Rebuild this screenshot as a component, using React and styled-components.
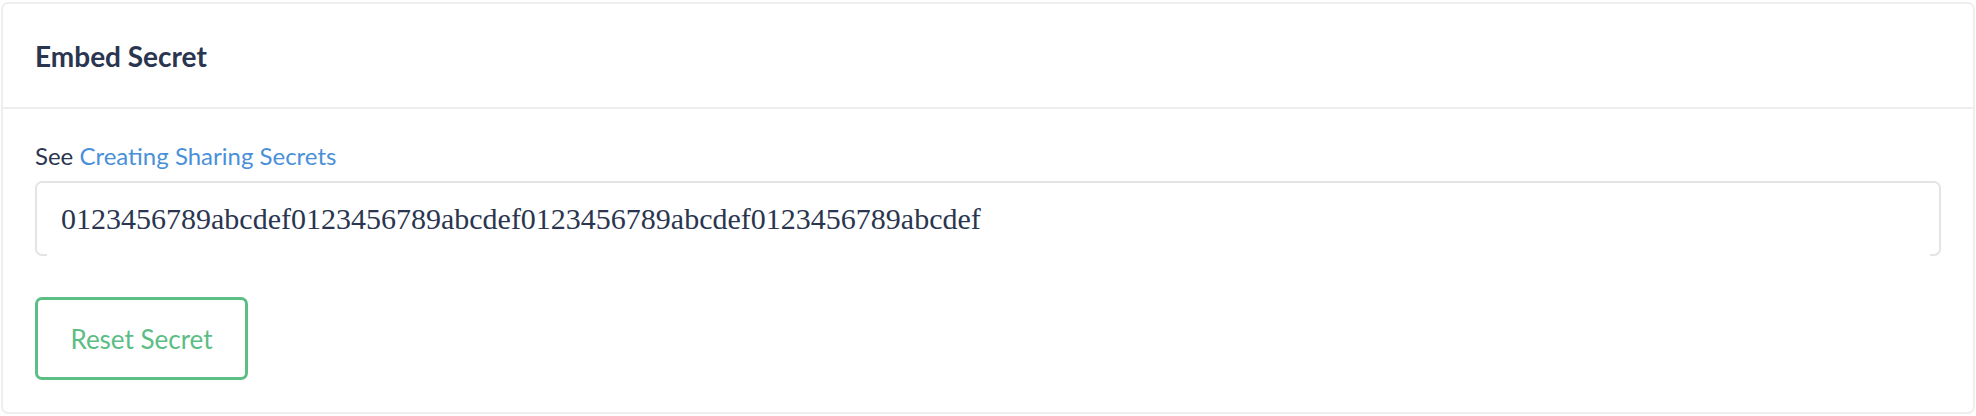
import React from 'react'
import styled, { createGlobalStyle } from 'styled-components'

const GlobalStyle = createGlobalStyle`
  html, body {
    margin: 0;
    padding: 0;
    background: #ffffff;
  }
  body {
    font-family: Lato, "Open Sans", sans-serif;
  }
`

const Page = styled.div`
  padding: 2px 1px 1px 1px;
`

const Card = styled.section`
  border: 2px solid #eeeeee;
  border-radius: 7px;
  background: #ffffff;
`

const Header = styled.header`
  height: 103px;
  padding: 0 32px;
  display: flex;
  align-items: center;
  border-bottom: 2px solid #eeeeee;
`

const Title = styled.h2`
  margin: 0;
  font-size: 28px;
  font-weight: 700;
  color: #2a3650;
`

const Body = styled.div`
  padding: 30px 32px 32px;
  display: flex;
  flex-direction: column;
  align-items: flex-start;
`

const Label = styled.p`
  margin: 0 0 8px;
  font-size: 24px;
  line-height: 34px;
  color: #2a3650;
`

const Link = styled.a`
  color: #4a90d9;
  text-decoration: none;
`

const Field = styled.div`
  position: relative;
  align-self: stretch;
  height: 71px;
  border: 2px solid #e4e4e4;
  border-radius: 7px;
  box-sizing: content-box;

  &::after {
    content: '';
    position: absolute;
    left: 10px;
    right: 9px;
    bottom: -2px;
    height: 2px;
    background: #ffffff;
  }
`

const Input = styled.input`
  width: 100%;
  height: 100%;
  box-sizing: border-box;
  border: none;
  outline: none;
  background: transparent;
  padding: 0 24px;
  font-family: "Liberation Serif", "Times New Roman", serif;
  font-size: 30px;
  color: #2a3650;
`

const Button = styled.button`
  margin-top: 41px;
  width: 213px;
  height: 83px;
  border: 3px solid #5cbd85;
  border-radius: 7px;
  background: #ffffff;
  color: #5cbd85;
  font-family: Lato, "Open Sans", sans-serif;
  font-size: 26px;
  cursor: pointer;
`

const SECRET = '0123456789abcdef'.repeat(4)

export default function App() {
  return (
    <Page>
      <GlobalStyle />
      <Card>
        <Header>
          <Title>Embed Secret</Title>
        </Header>
        <Body>
          <Label>
            See <Link href="#">Creating Sharing Secrets</Link>
          </Label>
          <Field>
            <Input readOnly value={SECRET} />
          </Field>
          <Button>Reset Secret</Button>
        </Body>
      </Card>
    </Page>
  )
}
